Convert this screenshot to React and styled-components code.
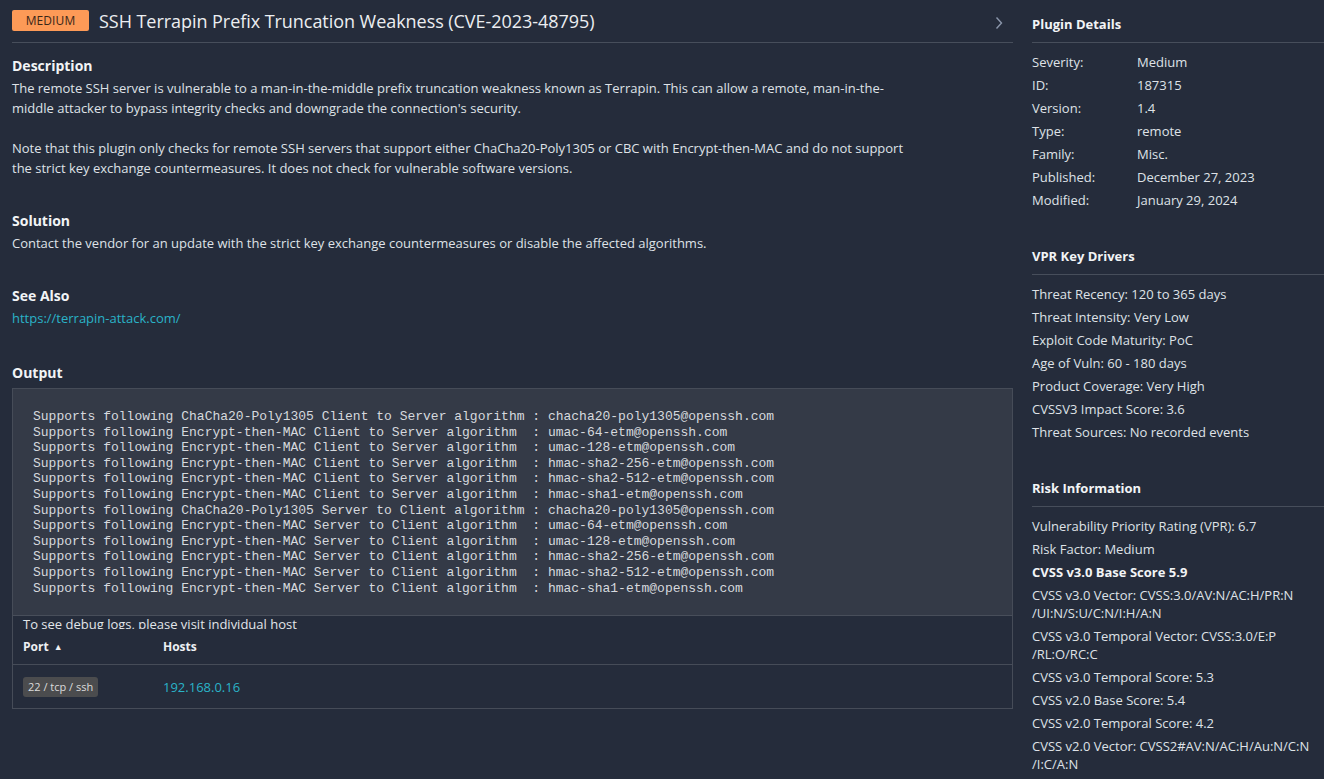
import styled, { createGlobalStyle } from "styled-components";

const GlobalStyle = createGlobalStyle`
  html, body {
    margin: 0;
    padding: 0;
    background: #252c3b;
    color: #dfe2e7;
    font-family: "Open Sans", "Liberation Sans", sans-serif;
    font-size: 13px;
  }
  * { box-sizing: border-box; }
`;

const outputLines = [
  "Supports following ChaCha20-Poly1305 Client to Server algorithm : chacha20-poly1305@openssh.com",
  "Supports following Encrypt-then-MAC Client to Server algorithm  : umac-64-etm@openssh.com",
  "Supports following Encrypt-then-MAC Client to Server algorithm  : umac-128-etm@openssh.com",
  "Supports following Encrypt-then-MAC Client to Server algorithm  : hmac-sha2-256-etm@openssh.com",
  "Supports following Encrypt-then-MAC Client to Server algorithm  : hmac-sha2-512-etm@openssh.com",
  "Supports following Encrypt-then-MAC Client to Server algorithm  : hmac-sha1-etm@openssh.com",
  "Supports following ChaCha20-Poly1305 Server to Client algorithm : chacha20-poly1305@openssh.com",
  "Supports following Encrypt-then-MAC Server to Client algorithm  : umac-64-etm@openssh.com",
  "Supports following Encrypt-then-MAC Server to Client algorithm  : umac-128-etm@openssh.com",
  "Supports following Encrypt-then-MAC Server to Client algorithm  : hmac-sha2-256-etm@openssh.com",
  "Supports following Encrypt-then-MAC Server to Client algorithm  : hmac-sha2-512-etm@openssh.com",
  "Supports following Encrypt-then-MAC Server to Client algorithm  : hmac-sha1-etm@openssh.com",
];

const pluginDetails = [
  ["Severity:", "Medium"],
  ["ID:", "187315"],
  ["Version:", "1.4"],
  ["Type:", "remote"],
  ["Family:", "Misc."],
  ["Published:", "December 27, 2023"],
  ["Modified:", "January 29, 2024"],
];

const vprDrivers = [
  "Threat Recency: 120 to 365 days",
  "Threat Intensity: Very Low",
  "Exploit Code Maturity: PoC",
  "Age of Vuln: 60 - 180 days",
  "Product Coverage: Very High",
  "CVSSV3 Impact Score: 3.6",
  "Threat Sources: No recorded events",
];

const riskInfo = [
  { text: "Vulnerability Priority Rating (VPR): 6.7" },
  { text: "Risk Factor: Medium" },
  { text: "CVSS v3.0 Base Score 5.9", bold: true },
  { text: "CVSS v3.0 Vector: CVSS:3.0/AV:N/AC:H/PR:N\n/UI:N/S:U/C:N/I:H/A:N" },
  { text: "CVSS v3.0 Temporal Vector: CVSS:3.0/E:P\n/RL:O/RC:C" },
  { text: "CVSS v3.0 Temporal Score: 5.3" },
  { text: "CVSS v2.0 Base Score: 5.4" },
  { text: "CVSS v2.0 Temporal Score: 4.2" },
  { text: "CVSS v2.0 Vector: CVSS2#AV:N/AC:H/Au:N/C:N\n/I:C/A:N" },
];

export default function App() {
  return (
    <>
      <GlobalStyle />
      <Page>
        <Main>
          <Header>
            <SeverityBadge>Medium</SeverityBadge>
            <Title>SSH Terrapin Prefix Truncation Weakness (CVE-2023-48795)</Title>
            <Chevron width="8" height="14" viewBox="0 0 8 14">
              <path d="M1.5 1.5 L6.5 7 L1.5 12.5" fill="none" stroke="#8b96ab" strokeWidth="1.4" />
            </Chevron>
          </Header>

          <Section>
            <SectionTitle>Description</SectionTitle>
            <Paragraph>
              {"The remote SSH server is vulnerable to a man-in-the-middle prefix truncation weakness known as Terrapin. This can allow a remote, man-in-the-middle attacker to bypass integrity checks and downgrade the connection's security.\n\nNote that this plugin only checks for remote SSH servers that support either ChaCha20-Poly1305 or CBC with Encrypt-then-MAC and do not support the strict key exchange countermeasures. It does not check for vulnerable software versions."}
            </Paragraph>
          </Section>

          <Section>
            <SectionTitle>Solution</SectionTitle>
            <Paragraph>
              Contact the vendor for an update with the strict key exchange countermeasures or disable the affected algorithms.
            </Paragraph>
          </Section>

          <Section>
            <SectionTitle>See Also</SectionTitle>
            <Paragraph>
              <Link href="#">https://terrapin-attack.com/</Link>
            </Paragraph>
          </Section>

          <Section $gap={34}>
            <SectionTitle $spacing={4}>Output</SectionTitle>
            <OutputPanel>
              <Pre>{outputLines.join("\n")}</Pre>
              <DebugNote>To see debug logs, please visit individual host</DebugNote>
              <HostTable>
                <thead>
                  <tr>
                    <Th $width={140}>
                      Port <SortArrow>▲</SortArrow>
                    </Th>
                    <Th>Hosts</Th>
                  </tr>
                </thead>
                <tbody>
                  <tr>
                    <Td>
                      <PortTag>22 / tcp / ssh</PortTag>
                    </Td>
                    <Td>
                      <Link href="#">192.168.0.16</Link>
                    </Td>
                  </tr>
                </tbody>
              </HostTable>
            </OutputPanel>
          </Section>
        </Main>

        <Sidebar>
          <SideSection>
            <SideTitle>Plugin Details</SideTitle>
            <SideList>
              {pluginDetails.map(([label, value]) => (
                <DetailRow key={label}>
                  <DetailLabel>{label}</DetailLabel>
                  <span>{value}</span>
                </DetailRow>
              ))}
            </SideList>
          </SideSection>

          <SideSection>
            <SideTitle>VPR Key Drivers</SideTitle>
            <SideList $offset={7}>
              {vprDrivers.map((item) => (
                <SideItem key={item}>{item}</SideItem>
              ))}
            </SideList>
          </SideSection>

          <SideSection>
            <SideTitle>Risk Information</SideTitle>
            <SideList $offset={7}>
              {riskInfo.map((item) => (
                <SideItem key={item.text} $bold={item.bold}>
                  {item.text}
                </SideItem>
              ))}
            </SideList>
          </SideSection>
        </Sidebar>
      </Page>
    </>
  );
}

const Page = styled.div`
  display: grid;
  grid-template-columns: 1001px 292px;
  column-gap: 19px;
  padding-left: 12px;
  min-height: 100vh;
`;

const Main = styled.main`
  display: flex;
  flex-direction: column;
`;

const Header = styled.header`
  display: flex;
  align-items: center;
  height: 43px;
  border-bottom: 1px solid #474e5b;
  padding-bottom: 1px;
`;

const SeverityBadge = styled.span`
  display: inline-flex;
  align-items: center;
  justify-content: center;
  height: 21px;
  width: 77px;
  background: #fd9a57;
  color: #3b2617;
  border-radius: 2px;
  font-size: 12px;
  text-transform: uppercase;
  letter-spacing: 0.1px;
`;

const Title = styled.h1`
  margin: 0 0 0 10px;
  padding-top: 1px;
  font-size: 18px;
  font-weight: 400;
  letter-spacing: -0.05px;
  color: #eceef1;
  flex: 1;
`;

const Chevron = styled.svg`
  margin: 5px 10px 0 0;
`;

const Section = styled.section`
  margin-top: ${(p) => p.$gap ?? 32}px;
  &:first-of-type {
    margin-top: 12px;
  }
`;

const SectionTitle = styled.h2`
  margin: 0 0 ${(p) => p.$spacing ?? 1}px;
  font-size: 14px;
  line-height: 22px;
  font-weight: 700;
  color: #f2f4f6;
`;

const Paragraph = styled.p`
  margin: 0;
  max-width: 905px;
  line-height: 20px;
  white-space: pre-wrap;
`;

const Link = styled.a`
  color: #2ab3c8;
  text-decoration: none;
`;

const OutputPanel = styled.div`
  border: 1px solid #464c58;
`;

const Pre = styled.pre`
  margin: 0;
  padding: 20px 20px 19px;
  background: #343a47;
  border-bottom: 1px solid #484e5a;
  font-family: "Liberation Mono", "Courier New", monospace;
  font-size: 13px;
  line-height: 15.6px;
  color: #d6d9de;
`;

const DebugNote = styled.div`
  height: 13px;
  overflow: hidden;
  padding-left: 10px;
  line-height: 16px;
  color: #e2e5e9;
`;

const HostTable = styled.table`
  width: 100%;
  border-collapse: collapse;
`;

const Th = styled.th`
  height: 35px;
  padding: 1px 10px 0;
  text-align: left;
  font-size: 12px;
  font-weight: 700;
  color: #eef0f3;
  border-bottom: 1px solid #464c58;
  width: ${(p) => (p.$width ? `${p.$width}px` : "auto")};
`;

const SortArrow = styled.span`
  font-size: 9px;
  vertical-align: 1px;
  margin-left: 2px;
`;

const Td = styled.td`
  height: 44px;
  padding: 1px 10px 0;
  vertical-align: middle;
`;

const PortTag = styled.span`
  display: inline-block;
  padding: 0 5px;
  height: 20px;
  line-height: 20px;
  background: #4b4c4e;
  border-radius: 3px;
  font-size: 11px;
  color: #dcdcdc;
`;

const Sidebar = styled.aside`
  display: flex;
  flex-direction: column;
  gap: 20px;
`;

const SideSection = styled.section``;

const SideTitle = styled.h3`
  margin: 0;
  padding: 14px 0 8px;
  font-size: 13px;
  line-height: 20px;
  font-weight: 700;
  color: #f2f4f6;
  border-bottom: 1px solid #474e5b;
`;

const SideList = styled.div`
  padding-top: ${(p) => p.$offset ?? 8}px;
  padding-bottom: ${(p) => (p.$offset ? 8 - p.$offset : 0)}px;
`;

const DetailRow = styled.div`
  display: flex;
  line-height: 23px;
`;

const DetailLabel = styled.span`
  width: 105px;
  flex-shrink: 0;
`;

const SideItem = styled.div`
  padding: 2.5px 0;
  line-height: 18px;
  white-space: pre-line;
  font-weight: ${(p) => (p.$bold ? 700 : 400)};
  color: ${(p) => (p.$bold ? "#f2f4f6" : "inherit")};
`;
